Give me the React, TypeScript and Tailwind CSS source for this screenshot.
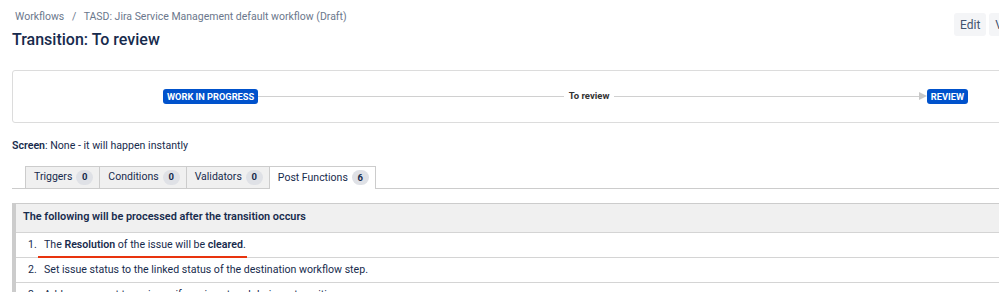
import React from 'react';

const font = { fontFamily: 'Roboto, "Liberation Sans", Arial, sans-serif' };

const tabs = [
  { name: 'Triggers', count: 0 },
  { name: 'Conditions', count: 0 },
  { name: 'Validators', count: 0 },
  { name: 'Post Functions', count: 6, active: true },
];

const Lozenge: React.FC<{ label: string }> = ({ label }) => (
  <span className="inline-flex h-[15px] items-center rounded-[3px] bg-[#0052cc] px-[4px] text-[9.25px] font-bold leading-none text-white">
    {label}
  </span>
);

export default function App() {
  return (
    <div className="h-[292px] w-[999px] overflow-hidden bg-white text-[#172b4d]" style={font}>
      <div className="w-[1060px]">
        {/* Header */}
        <div className="flex items-start">
          <div className="w-[954px] pl-[12px] pt-[9px]">
            <div className="pl-[3px] text-[10.5px] text-[#6b778c]">
              Workflows <span className="mx-[5px]">/</span> TASD: Jira Service Management default workflow (Draft)
            </div>
            <h1 className="mt-[4px] text-[16px] font-medium leading-[22px] text-[#172b4d]">Transition: To review</h1>
          </div>
          <div className="mt-[13px] flex gap-[3px]">
            <button className="h-[23px] rounded-[3px] bg-[#f4f5f7] px-[6px] text-[12px] text-[#42526e]">Edit</button>
            <button className="h-[23px] rounded-[3px] bg-[#f4f5f7] px-[6px] text-[12px] text-[#42526e]">View</button>
          </div>
        </div>

        {/* Diagram */}
        <div className="ml-[12px] mt-[19px] flex h-[53px] items-center rounded-[3px] border border-[#dcdcdc] pl-[150px] pr-[91px]">
          <Lozenge label="WORK IN PROGRESS" />
          <div className="h-px flex-1 bg-[#d0d0d0]" />
          <span className="px-[5px] text-[9.5px] font-bold text-[#333]">To review</span>
          <div className="h-px flex-1 bg-[#d0d0d0]" />
          <svg width="8" height="8" viewBox="0 0 8 8" className="-ml-px">
            <path d="M0 0 L8 4 L0 8 Z" fill="#c8c8c8" />
          </svg>
          <Lozenge label="REVIEW" />
        </div>

        {/* Screen */}
        <div className="ml-[12px] mt-[15px] text-[10.6px] text-[#172b4d]">
          <span className="font-semibold">Screen</span>: None - it will happen instantly
        </div>

        {/* Tabs */}
        <div className="ml-[12px] mt-[12px] flex border-b border-[#cccccc] pl-[13px]">
          {tabs.map((t) => (
            <div
              key={t.name}
              className={
                t.active
                  ? '-mb-px flex h-[23px] items-center border border-b-0 border-[#cccccc] bg-white pl-[8px] pr-[6px] text-[10.5px] text-[#172b4d]'
                  : 'flex h-[22px] items-center border border-r-0 border-b-0 border-[#cccccc] bg-[#f0f0f0] pl-[8px] pr-[6px] text-[10.5px] text-[#172b4d]'
              }
            >
              {t.name}
              <span className="ml-[4px] inline-flex h-[15px] min-w-[17px] items-center justify-center rounded-full bg-[#dfe1e6] px-[5px] text-[9.5px] font-bold">
                {t.count}
              </span>
            </div>
          ))}
        </div>

        {/* Table */}
        <div className="ml-[12px] mt-[14px] border-l-[4px] border-t border-[#cccccc]">
          <div className="flex h-[29px] items-center border-b border-[#d4d4d4] bg-[#f0f0f0] pl-[7px] text-[10.9px] font-semibold text-[#172b4d]">
            The following will be processed after the transition occurs
          </div>
          <div className="flex h-[25px] items-center border-b border-[#d4d4d4] pl-[12px] text-[10.6px]">
            <span className="w-[16px]">1.</span>
            <span className="relative">
              The <span className="font-semibold">Resolution</span> of the issue will be{' '}
              <span className="font-semibold">cleared</span>.
              <span className="absolute bottom-[-5px] left-[-6px] right-[-1px] h-[2px] bg-[#e8340e]" />
            </span>
          </div>
          <div className="flex h-[25px] items-center border-b border-[#d4d4d4] pl-[12px] text-[10.6px]">
            <span className="w-[16px]">2.</span>
            <span>Set issue status to the linked status of the destination workflow step.</span>
          </div>
          <div className="flex h-[25px] items-center border-b border-[#d4d4d4] pl-[12px] text-[10.6px]">
            <span className="w-[16px]">3.</span>
            <span>Add a comment to an issue if one is entered during a transition.</span>
          </div>
        </div>
      </div>
    </div>
  );
}
